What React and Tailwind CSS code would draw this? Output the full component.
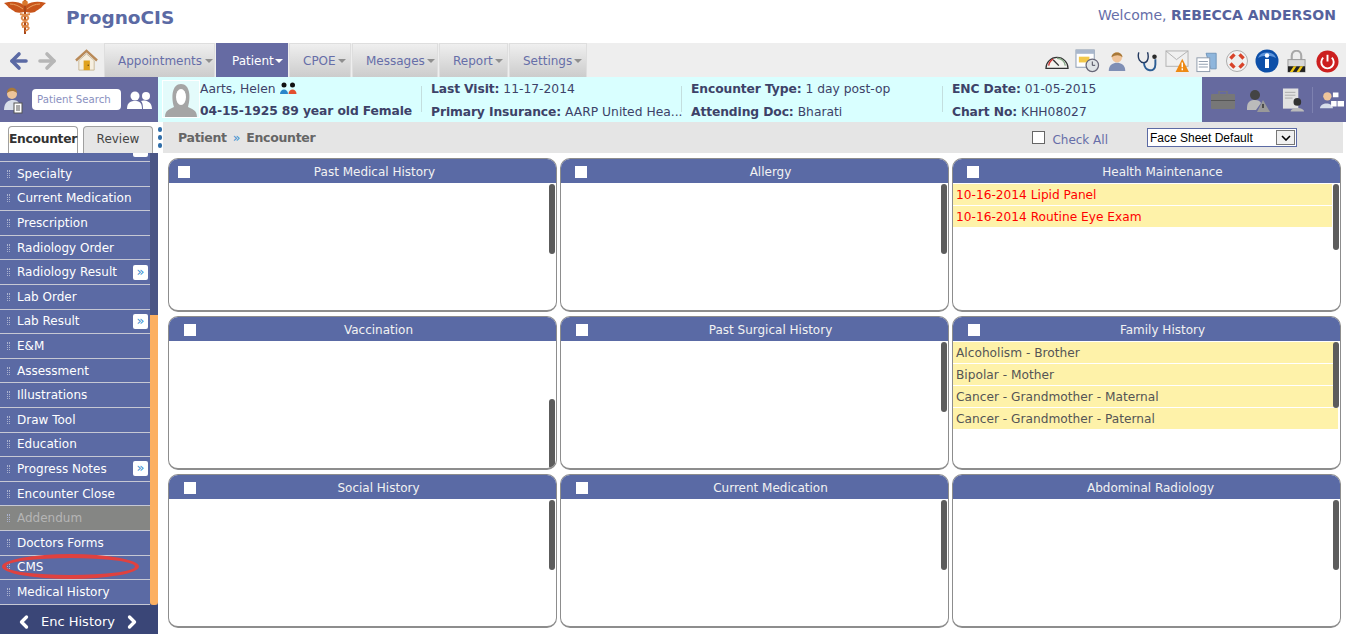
import React from "react";
import { ArrowLeft, ArrowRight, ChevronLeft, ChevronRight } from "lucide-react";

const font = "font-['DejaVu_Sans',sans-serif]";

const navTabs = [
  { label: "Appointments", w: "w-[111px]", caret: "ml-[3px]" },
  { label: "Patient", w: "w-[72px]", active: true, caret: "ml-[1px]" },
  { label: "CPOE", w: "w-[62px]", caret: "ml-[2px]" },
  { label: "Messages", w: "w-[86px]", caret: "ml-[2px]" },
  { label: "Report", w: "w-[69px]", caret: "ml-[2px]" },
  { label: "Settings", w: "w-[78px]", caret: "ml-[2px]" },
];

const sideItems = [
  { label: "Specialty" },
  { label: "Current Medication" },
  { label: "Prescription" },
  { label: "Radiology Order" },
  { label: "Radiology Result", more: true },
  { label: "Lab Order" },
  { label: "Lab Result", more: true },
  { label: "E&M" },
  { label: "Assessment" },
  { label: "Illustrations" },
  { label: "Draw Tool" },
  { label: "Education" },
  { label: "Progress Notes", more: true },
  { label: "Encounter Close" },
  { label: "Addendum", disabled: true },
  { label: "Doctors Forms" },
  { label: "CMS" },
  { label: "Medical History" },
];

const panels = [
  { title: "Past Medical History", thumb: "top-[1px] h-[70px]", box: "ml-[9px]", title2: "pl-[24px]" },
  { title: "Allergy", thumb: "top-[1px] h-[70px]", box: "ml-[14px]", title2: "pl-[32px]" },
  {
    title: "Health Maintenance",
    thumb: "top-[1px] h-[66px]",
    box: "ml-[14px]",
    title2: "pl-[32px]",
    red: true,
    rows: ["10-16-2014 Lipid Panel", "10-16-2014 Routine Eye Exam"],
  },
  { title: "Vaccination", thumb: "top-[58px] h-[70px]", box: "ml-[15px]", title2: "pl-[32px]" },
  { title: "Past Surgical History", thumb: "top-[1px] h-[70px]", box: "ml-[15px]", title2: "pl-[32px]" },
  {
    title: "Family History",
    thumb: "top-[1px] h-[66px]",
    box: "ml-[15px]",
    title2: "pl-[32px]",
    rows: [
      "Alcoholism - Brother",
      "Bipolar - Mother",
      "Cancer - Grandmother - Maternal",
      "Cancer - Grandmother - Paternal",
    ],
  },
  { title: "Social History", thumb: "top-[1px] h-[70px]", box: "ml-[15px]", title2: "pl-[32px]" },
  { title: "Current Medication", thumb: "top-[1px] h-[70px]", box: "ml-[15px]", title2: "pl-[32px]" },
  { title: "Abdominal Radiology", thumb: "top-[1px] h-[70px]", nobox: true, title2: "pl-[8px]" },
];

function Caduceus() {
  return (
    <svg width="42" height="34" viewBox="0 0 42 34" className="ml-[4px] shrink-0">
      <path d="M20 5 C14 1 7 1 0 3 C2 5 4 6 5 8 C6 8 7 9 8 10 C9 10 10 11 11 12 C14 13 17 13 20 12Z" fill="#c8551b" />
      <path d="M22 5 C28 1 35 1 42 3 C40 5 38 6 37 8 C36 8 35 9 34 10 C33 10 32 11 31 12 C28 13 25 13 22 12Z" fill="#c8551b" />
      <path d="M6 4 C11 4 15 6 19 9 M36 4 C31 4 27 6 23 9" stroke="#e9a15f" fill="none" />
      <path d="M20 0h2v34h-2z" fill="#a8481a" />
      <circle cx="21" cy="3" r="2.8" fill="#d9772b" />
      <path d="M16 14 C25 16 27 18 21 21 C16 24 17 26 24 27 C26 28 24 30 21 31 M26 14 C17 16 15 18 21 21 C26 24 25 26 18 27" stroke="#df8a4a" strokeWidth="1.8" fill="none" />
    </svg>
  );
}

function HomeIcon() {
  return (
    <svg width="23" height="23" viewBox="0 0 24 24">
      <path d="M1 12 L12 2 L23 12" fill="none" stroke="#b98a58" strokeWidth="2.5" />
      <path d="M4 12 L12 5 L20 12 V22 H4Z" fill="#f6efe0" stroke="#c9b999" />
      <rect x="9" y="12" width="6.5" height="10" fill="#e0a21c" />
      <circle cx="13.8" cy="17" r="0.8" fill="#6b4a12" />
    </svg>
  );
}

function ToolIcons() {
  return (
    <div className="flex items-center pr-[7px] mt-[2px]">
      <svg width="24" height="20" viewBox="0 0 26 20">
        <path d="M1 18 A12 12 0 0 1 25 18 Z" fill="#f5f5f0" stroke="#333" strokeWidth="1.3" />
        <path d="M4 15 A9 9 0 0 1 9 8" stroke="#c33" strokeWidth="1.5" fill="none" />
        <path d="M13 7 A9 9 0 0 1 22 15" stroke="#8a8" strokeWidth="1.5" fill="none" />
        <path d="M9 9 L15 15" stroke="#333" strokeWidth="1.5" />
      </svg>
      <svg width="25" height="24" viewBox="0 0 26 25" className="ml-[6px]">
        <rect x="1" y="1" width="19" height="18" fill="#fff" stroke="#8a9ab0" />
        <rect x="1" y="1" width="19" height="4" fill="#a9b7cc" />
        <rect x="4" y="8" width="11" height="6" fill="#f2c84b" />
        <circle cx="18" cy="17" r="6.5" fill="#dfe3e6" stroke="#667" strokeWidth="1.3" />
        <path d="M18 13 V17 H21" stroke="#445" fill="none" />
      </svg>
      <svg width="20" height="22" viewBox="0 0 20 24" className="ml-[7px]">
        <path d="M1 23 C1 16 6 14 10 14 C14 14 19 16 19 23Z" fill="#7f8fb5" />
        <circle cx="10" cy="8" r="5.5" fill="#f0c49a" />
        <path d="M4 8 C4 1 16 1 16 8 C13 5 8 5 4 8Z" fill="#a87838" />
      </svg>
      <svg width="21" height="23" viewBox="0 0 24 25" className="ml-[10px]">
        <path d="M2 2 C0 10 4 14 8 14 C12 14 14 8 12 2" fill="none" stroke="#23395f" strokeWidth="1.6" />
        <path d="M8 14 C8 24 21 26 21 16 V10" fill="none" stroke="#2c5d94" strokeWidth="2.2" />
        <circle cx="20" cy="7" r="2.6" fill="#2b2b2b" />
      </svg>
      <svg width="24" height="23" viewBox="0 0 25 24" className="ml-[7px]">
        <rect x="1" y="1" width="23" height="16" fill="#f0f0f0" stroke="#b0b0b0" />
        <path d="M1 1 L12 10 L24 1" fill="none" stroke="#b0b0b0" />
        <path d="M11 23 L18 9 L25 23Z" fill="#ee8a14" />
        <path d="M18 13v5m0 1v2" stroke="#fff" strokeWidth="1.5" />
      </svg>
      <svg width="22" height="23" viewBox="0 0 24 24" className="ml-[7px]">
        <path d="M11 3 H22 V20 H16Z" fill="#8fb6dc" stroke="#6f93b8" />
        <rect x="1" y="8" width="14" height="15" fill="#fff" stroke="#8a97a8" />
        <path d="M3 12h10M3 15h10M3 18h10" stroke="#8a97a8" />
      </svg>
      <svg width="22" height="22" viewBox="0 0 23 23" className="ml-[8px]">
        <circle cx="11.5" cy="11.5" r="8.5" fill="none" stroke="#f2f2f2" strokeWidth="5" />
        <circle cx="11.5" cy="11.5" r="11" fill="none" stroke="#999" strokeWidth="0.8" />
        <path d="M5.5 5.5 L8 8 M17.5 5.5 L15 8 M5.5 17.5 L8 15 M17.5 17.5 L15 15" stroke="#d8432a" strokeWidth="6" />
      </svg>
      <svg width="24" height="24" viewBox="0 0 24 24" className="ml-[7px]">
        <circle cx="12" cy="12" r="11.5" fill="#0d4fa8" />
        <path d="M3 9 A9.5 8 0 0 1 21 9 C16 6 8 6 3 9Z" fill="#5d95dc" />
        <path d="M10 10h4v9h-4z" fill="#fff" />
        <circle cx="12" cy="6.5" r="2.2" fill="#fff" />
      </svg>
      <svg width="19" height="23" viewBox="0 0 20 24" className="ml-[8px]">
        <path d="M5 11 V6 C5 -1 15 -1 15 6 V11" fill="none" stroke="#a8a8a8" strokeWidth="2.2" />
        <rect x="1" y="10" width="18" height="13" fill="#d8d8d8" stroke="#999" />
        <path d="M1 17h18v6H1z" fill="#222" />
        <path d="M3 23l4-6h3l-4 6zM10 23l4-6h3l-4 6z" fill="#f0c814" />
      </svg>
      <svg width="23" height="23" viewBox="0 0 24 24" className="ml-[10px]">
        <circle cx="12" cy="12" r="11.5" fill="#cc1f1f" />
        <path d="M7.5 8 A6.5 6.5 0 1 0 16.5 8" fill="none" stroke="#fff" strokeWidth="2" />
        <path d="M12 5v7" stroke="#fff" strokeWidth="2" />
      </svg>
    </div>
  );
}

function Field({ label, value }) {
  return (
    <div className="h-[23px] flex items-center whitespace-nowrap">
      <span className="font-bold tracking-[-0.1px]">{label}</span>
      <span className="ml-[4px]">{value}</span>
    </div>
  );
}

function InfoCol({ w, rows }) {
  return (
    <div className={`relative ${w} pl-[10px] pt-[1px]`}>
      <span className="absolute left-0 top-[9px] h-[26px] w-px bg-[#c3dede]" />
      {rows.map((r) => (
        <Field key={r.label} label={r.label} value={r.value} />
      ))}
    </div>
  );
}

function SideRow({ item }) {
  return (
    <div
      className={`h-[24.6px] shrink-0 flex items-center border-b border-[#c6c8d4] ${
        item.disabled ? "bg-[#858684] text-[#b5b5b5]" : "bg-[#5b6aa4] text-white"
      }`}
    >
      <span className="ml-[7px] w-[3px] h-[8px] border-x border-dotted border-[#aab2cf]" />
      <span className="ml-[7px] text-[12px]">{item.label}</span>
      {item.more && (
        <span className="ml-auto mr-[2px] w-[15px] h-[15px] bg-white rounded-[2px] text-[#3a8fd0] text-[13px] leading-[13px] text-center">
          {item.label && "»"}
        </span>
      )}
    </div>
  );
}

function Panel({ panel }) {
  return (
    <div className="relative rounded-[10px] border border-[#8d8d8d] border-b-2 bg-white overflow-hidden flex flex-col">
      <div className={`relative h-[24px] shrink-0 bg-[#5a6aa5] text-[#f2f2f2] text-[12px] flex items-center justify-center pt-[1px] ${panel.title2}`}>
        {!panel.nobox && (
          <span className={`absolute left-0 w-[12px] h-[12px] bg-white ${panel.box}`} />
        )}
        {panel.title}
      </div>
      <div className="relative flex-1 pt-px">
        {panel.rows &&
          panel.rows.map((r) => (
            <div
              key={r}
              className={`h-[21px] mb-px pl-[3px] pt-[1px] flex items-center text-[12.2px] bg-[#fef2a9] ${
                panel.red ? "text-[#f00] mr-[8px]" : "text-[#555] mr-[2px]"
              }`}
            >
              {r}
            </div>
          ))}
        <span className={`absolute right-[1px] w-[6px] rounded-[3px] bg-[#5c5c5c] ${panel.thumb}`} />
      </div>
    </div>
  );
}

export default function App() {
  return (
    <div className={`${font} w-[1346px] h-[634px] overflow-hidden bg-white flex flex-col`}>
      {/* top header */}
      <div className="h-[43px] shrink-0 flex items-start">
        <Caduceus />
        <span className="ml-[20px] mt-[4px] text-[18.5px] font-bold text-[#5b6aa4]">PrognoCIS</span>
        <span className="ml-auto mt-[5px] mr-[10px] text-[#666ea8] text-[14px]">
          Welcome, <b className="text-[#56629d]">REBECCA ANDERSON</b>
        </span>
      </div>

      {/* nav */}
      <div className="h-[34px] shrink-0 bg-[#eeeeee] flex items-center">
        <ArrowLeft className="ml-[7px] mt-[2px] text-[#5b6aa4]" size={24} strokeWidth={3.6} />
        <ArrowRight className="ml-[4px] mt-[2px] text-[#b6b6b6]" size={24} strokeWidth={3.6} />
        <div className="ml-[16px] mt-[1px]">
          <HomeIcon />
        </div>
        <div className="ml-[6px] flex self-stretch gap-px">
          {navTabs.map((t) => (
            <div
              key={t.label}
              className={`${t.w} flex items-center text-[12px] ${
                t.active
                  ? "bg-[#666ba3] text-white pl-[16px] pt-[2px]"
                  : "pl-[13px] pt-[1px] border-x border-t border-[#dedede] bg-gradient-to-b from-[#efefef] to-[#cccccc] text-[#666ea8]"
              }`}
            >
              {t.label}
              <span className={`${t.caret} border-x-[4px] border-t-[4px] border-x-transparent ${t.active ? "border-t-white" : "border-t-[#8f8f8f]"}`} />
            </div>
          ))}
        </div>
        <div className="ml-auto">
          <ToolIcons />
        </div>
      </div>

      {/* patient bar */}
      <div className="h-[45px] shrink-0 flex text-[12.3px] text-[#3d4268]">
        <div className="w-[158px] shrink-0 bg-[#666a9f] flex items-center">
          <svg width="20" height="28" viewBox="0 0 20 28" className="ml-[3px]">
            <circle cx="9" cy="8" r="5" fill="#eec49a" />
            <path d="M4 7 C4 0 14 0 14 7 C10 4 7 5 4 7Z" fill="#a8783a" />
            <path d="M1 24 C1 16 6 14 10 14 C13 14 15 15 16 17 V24Z" fill="#d8deea" />
            <rect x="11" y="17" width="8" height="10" fill="#fff" stroke="#555" />
            <path d="M13 20h4M13 22h4M13 24h4" stroke="#555" />
          </svg>
          <div className="ml-[9px] w-[89px] h-[21px] rounded-[4px] bg-white text-[#8a90c0] text-[10.2px] flex items-center pl-[5px] whitespace-nowrap">
            Patient Search
          </div>
          <svg width="26" height="20" viewBox="0 0 26 20" className="ml-[6px]">
            <circle cx="8" cy="6" r="4.5" fill="#fff" />
            <path d="M0 19 C0 12 4 11 8 11 C12 11 15 12 15 19Z" fill="#fff" />
            <circle cx="19" cy="6" r="4" fill="#fff" />
            <path d="M16 19 C16 14 15 12 14 11 C16 10 25 10 25 19Z" fill="#fff" />
          </svg>
        </div>
        <div className="flex-1 bg-[#d9ffff] flex">
          <div className="ml-[4px] mt-[3px] w-[38px] h-[38px] border border-white bg-[#e4fbfb] overflow-hidden flex items-end justify-center">
            <svg width="36" height="36" viewBox="0 0 36 36">
              <path d="M2 36 C2 29 7 28 11 26 C8 16 9 3 18 3 C27 3 28 16 25 26 C29 28 34 29 34 36Z" fill="#a5a5a5" />
              <ellipse cx="18" cy="16" rx="5" ry="8" fill="#fff" />
            </svg>
          </div>
          <div className="w-[219px] pt-[1px]">
            <div className="h-[22px] flex items-center">
              <span>Aarts, Helen</span>
              <svg width="17" height="14" viewBox="0 0 17 14" className="ml-[4px]">
                <circle cx="4" cy="3" r="2.5" fill="#111" />
                <path d="M0 12 C0 6 8 6 8 12Z" fill="#2b86c9" />
                <circle cx="12.5" cy="3" r="2.5" fill="#111" />
                <path d="M8.5 12 C8.5 6 16.5 6 16.5 12Z" fill="#e3502f" />
              </svg>
            </div>
            <div className="h-[23px] flex items-center font-bold tracking-[-0.1px] whitespace-nowrap">04-15-1925 89 year old Female</div>
          </div>
          <div className="ml-[2px] flex">
            <InfoCol
              w="w-[260px]"
              rows={[
                { label: "Last Visit:", value: "11-17-2014" },
                { label: "Primary Insurance:", value: "AARP United Hea..." },
              ]}
            />
            <InfoCol
              w="w-[261px]"
              rows={[
                { label: "Encounter Type:", value: "1 day post-op" },
                { label: "Attending Doc:", value: "Bharati" },
              ]}
            />
            <InfoCol
              w="w-[200px]"
              rows={[
                { label: "ENC Date:", value: "01-05-2015" },
                { label: "Chart No:", value: "KHH08027" },
              ]}
            />
          </div>
        </div>
        <div className="w-[144px] shrink-0 bg-[#666a9f] flex items-center pl-[9px]">
          <svg width="24" height="18" viewBox="0 0 24 18">
            <rect x="0" y="3" width="24" height="15" rx="1" fill="#777" />
            <rect x="8" y="0" width="8" height="4" fill="none" stroke="#777" strokeWidth="1.5" />
            <rect x="0" y="9" width="24" height="1" fill="#555" />
          </svg>
          <svg width="24" height="24" viewBox="0 0 24 24" className="ml-[11px]">
            <circle cx="9" cy="7" r="5" fill="#444" />
            <path d="M1 20 C1 13 5 12 9 12 C12 12 14 13 15 15 L10 22 H1Z" fill="#bbb" />
            <path d="M11 24 L17 12 L24 24Z" fill="#999" />
            <path d="M17 16v4" stroke="#333" strokeWidth="1.5" />
          </svg>
          <svg width="23" height="24" viewBox="0 0 24 24" className="ml-[12px]">
            <rect x="1" y="0" width="16" height="21" fill="#e2e2e2" />
            <path d="M3 4h11M3 7h11M3 10h8" stroke="#aaa" />
            <circle cx="16" cy="14" r="4" fill="#333" />
            <path d="M9 24 C9 19 23 19 23 24Z" fill="#bbb" />
          </svg>
          <div className="ml-[7px] w-px h-[26px] bg-[#7d81b0]" />
          <svg width="24" height="20" viewBox="0 0 26 20" className="ml-[7px]">
            <circle cx="8" cy="6" r="4.5" fill="#eec49a" />
            <path d="M0 19 C0 12 14 12 14 19Z" fill="#d8deea" />
            <path d="M14 2h6v5h-6zM12 11h6v6h-6zM19 11h7v6h-7z" fill="#fff" />
          </svg>
        </div>
      </div>

      {/* body */}
      <div className="flex-1 min-h-0 flex">
        <div className="relative w-[158px] shrink-0 flex flex-col overflow-hidden">
          <div className="h-[31px] shrink-0 flex pl-[8px] pt-[4px] gap-[5px] text-[12px] bg-white">
            <div className="w-[70px] h-[27px] pb-[1px] border border-b-0 border-[#a0a0a0] rounded-t-[4px] bg-white font-bold text-[#333] flex items-center justify-center text-[12.3px] tracking-[-0.3px] whitespace-nowrap">
              Encounter
            </div>
            <div className="w-[70px] h-[27px] pb-[3px] border border-b-0 border-[#a0a0a0] rounded-t-[4px] bg-[#e6e6e6] text-[#444] flex items-center justify-center">
              Review
            </div>
          </div>
          <div className="flex-1 min-h-0 flex bg-[#4a5585] overflow-hidden">
            <div className="w-[150px] flex flex-col -mt-[15.6px]">
              <SideRow item={{ label: "", more: true }} />
              {sideItems.map((it) => (
                <SideRow key={it.label} item={it} />
              ))}
            </div>
          </div>
          <div className="h-[29px] shrink-0 pt-[4px] pr-[2px] bg-[#3a4677] text-white text-[13px] flex items-center justify-center gap-[7px]">
            <ChevronLeft size={20} strokeWidth={4} />
            Enc History
            <ChevronRight size={20} strokeWidth={4} />
          </div>
          {/* scroll thumb */}
          <div className="absolute left-[150px] top-[193px] w-[8px] h-[290px] bg-[#fcb062] rounded-b-[3px]" />
          {/* red annotation */}
          <div className="absolute left-[2px] top-[432px] w-[137px] h-[25px] rounded-[50%] border-[4px] border-[#e0413f]" />
        </div>

        <div className="flex-1 min-w-0 flex flex-col">
          <div className="h-[31px] shrink-0 flex">
            <div className="w-[5px] shrink-0 flex flex-col items-start justify-center gap-[3px]">
              <span className="w-[4px] h-[5px] rounded-full bg-[#2f6da8]" />
              <span className="w-[4px] h-[5px] rounded-full bg-[#2f6da8]" />
              <span className="w-[4px] h-[5px] rounded-full bg-[#2f6da8]" />
            </div>
            <div className="flex-1 mr-[3px] bg-[#e5e5e5] flex items-center text-[#666ea8]">
              <div className="ml-[15px] mt-[2px] text-[12.5px] font-bold text-[#666] tracking-[-0.3px] whitespace-nowrap">
                Patient <span className="mx-[2px] font-normal text-[#3a8fd0]">»</span> Encounter
              </div>
              <span className="ml-[717px] w-[13px] h-[13px] border border-[#666] bg-white" />
              <span className="ml-[7px] text-[12px] mt-[4px]">Check All</span>
              <div className="ml-[39px] w-[150px] h-[19px] border border-[#5b6aa4] bg-white flex items-center justify-between text-[12px] text-black font-['Liberation_Sans',sans-serif] pl-[2px]">
                Face Sheet Default
                <span className="w-[19px] h-[15px] mr-px border border-[#777] bg-[#f0f0f0] flex items-center justify-center">
                  <svg width="10" height="6" viewBox="0 0 10 6">
                    <path d="M1 1l4 4 4-4" fill="none" stroke="#000" strokeWidth="1.6" />
                  </svg>
                </span>
              </div>
            </div>
          </div>
          <div className="flex-1 min-h-0 ml-[10px] mr-[5px] mt-[5px] mb-[6px] grid grid-cols-3 grid-rows-3 gap-x-[3px] gap-y-[4px]">
            {panels.map((p) => (
              <Panel key={p.title} panel={p} />
            ))}
          </div>
        </div>
      </div>
    </div>
  );
}
